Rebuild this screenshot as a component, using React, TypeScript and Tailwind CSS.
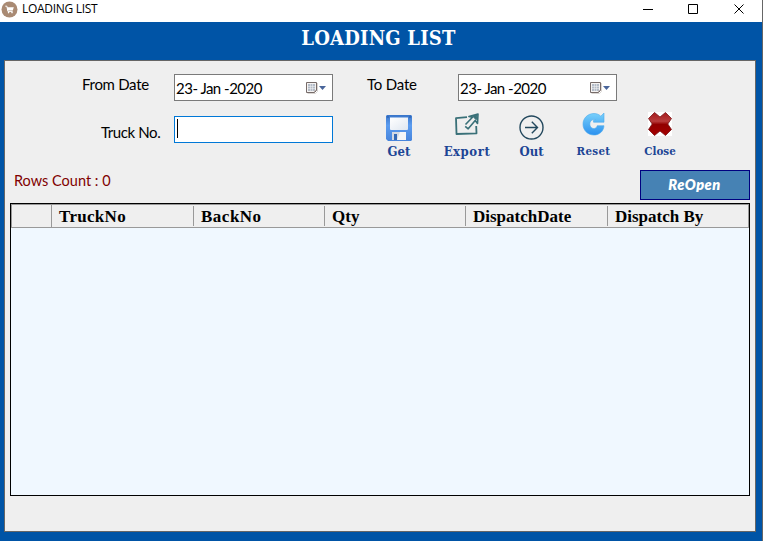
import React from 'react';

const sans = "font-['Lato','Liberation_Sans',sans-serif]";
const serif = "font-['DejaVu_Serif_Condensed','DejaVu_Serif',serif] font-bold";

function CartIcon() {
  return (
    <svg width="17" height="17" viewBox="0 0 17 17" className="shrink-0">
      <circle cx="8.5" cy="8.5" r="8" fill="#a98a73" />
      <path d="M4.3 5.2h1.6l1 5.2h4.7" fill="none" stroke="#fff" strokeWidth="1" />
      <path d="M6 6.2h6.8l-1 3.3H6.7z" fill="#fff" />
      <circle cx="7.6" cy="11.6" r=".8" fill="#fff" />
      <circle cx="11" cy="11.6" r=".8" fill="#fff" />
    </svg>
  );
}

function CalendarIcon() {
  return (
    <svg width="22" height="14" viewBox="0 0 22 14" className="shrink-0">
      <path d="M1.5 12.5h8l2-2V2" fill="none" stroke="#dad6d3" />
      <path d="M.5 1.5h10v8l-2 2h-8z" fill="#f5f3f2" stroke="#766b69" />
      <path d="M2 3h7v6l-1 1H2z" fill="#b4bcc8" />
      <path d="M2 5.5h7M2 7.5h7M4.5 3v7M6.5 3v7" stroke="#f5f5f5" strokeWidth=".5" />
      <path d="M10.5 9.5h-2v2z" fill="#766b69" />
      <path d="M13 5h7l-3.5 4z" fill="#49659a" />
    </svg>
  );
}

function DateField() {
  return (
    <div className="flex h-[27px] w-[159px] items-center justify-between border border-[#7a7a7a] bg-white pr-[4px] pl-[1px]">
      <span className="text-[15px] leading-[20px] tracking-[-0.5px] whitespace-pre text-black">23- Jan -2020</span>
      <CalendarIcon />
    </div>
  );
}

function SaveIcon() {
  return (
    <svg width="26" height="26" viewBox="0 0 26 26">
      <defs>
        <linearGradient id="disk" x2="0" y2="1"><stop stopColor="#3975c9" /><stop offset=".4" stopColor="#5b9cf0" /><stop offset="1" stopColor="#4785dc" /></linearGradient>
        <linearGradient id="paper" x2="1" y2="1"><stop stopColor="#fff" /><stop offset="1" stopColor="#dfe7f1" /></linearGradient>
      </defs>
      <path d="M1 0h24l1 1v24l-1 1H2l-2-2V1z" fill="url(#disk)" />
      <path d="M4 2.5h18V14q0 1-1 1H5q-1 0-1-1z" fill="url(#paper)" />
      <path d="M1.5 1.5h1v1h-1zm22 0h1v1h-1z" fill="#183e83" />
      <path d="M6 17h14v8H6z" fill="#d4dae3" />
      <path d="M14 17h6v8h-9z" fill="#f4f6f8" />
      <path d="M8 19h3v6H8z" fill="#3369b5" />
    </svg>
  );
}

function ExportIcon() {
  return (
    <svg width="24" height="22" viewBox="0 0 24 22" fill="none" stroke="#397078" strokeLinejoin="round">
      <path d="M12 4.2 1 5.1 1.5 21l20-.7-.3-7.3" strokeWidth="1.8" />
      <path d="m10.5 11.5 7-7.3-3.6-.7L23 1l-.5 9.5-2.3-3-7 8.3-3-2.5" strokeWidth="1.6" />
      <path d="M17.5 3 22 1.8l-.8 5z" fill="#397078" />
    </svg>
  );
}

function OutIcon() {
  return (
    <svg width="25" height="25" viewBox="0 0 25 25" fill="none" stroke="#23485d" strokeWidth="1.4">
      <circle cx="12.5" cy="12.5" r="11.5" />
      <path d="M6 12.5h12M12.8 6.8l5.7 5.7-5.7 5.7" />
    </svg>
  );
}

function ResetIcon() {
  return (
    <svg width="23" height="24" viewBox="0 0 23 24">
      <defs><linearGradient id="reset" x2="0" y2="1"><stop stopColor="#79d1fb" /><stop offset="1" stopColor="#2c91ef" /></linearGradient></defs>
      <path d="M22 1V10.2H11.5V8.4l2-.7C10.5 7 7.8 9 7.8 12s2.4 5 4.8 4.4c1.5-.4 2.2-1.2 2.6-2.7H22C21.6 19.3 17.3 23 12 23 5.8 23 1 18.3 1 12.2S5.8 1.5 12 1.5c2.8 0 5 1 6.8 2.7z" fill="url(#reset)" stroke="#49a9ed" strokeWidth=".6" />
    </svg>
  );
}

function CloseIcon() {
  return (
    <svg width="24" height="24" viewBox="0 0 24 24" className="bg-white">
      <defs><linearGradient id="close" x2="0" y2="1"><stop stopColor="#a51c1e" /><stop offset=".38" stopColor="#b83c3c" /><stop offset=".52" stopColor="#920000" /><stop offset="1" stopColor="#a40000" /></linearGradient></defs>
      <path d="M6.5.5 12 5l5.5-4.5 6 6L19.8 12l3.7 5.5-6 6L12 19l-5.5 4.5-6-6L4.2 12 .5 6.5z" fill="url(#close)" stroke="#791719" strokeWidth=".8" />
    </svg>
  );
}

function Tool({ icon, label, className }: { icon: React.ReactNode; label: string; className: string }) {
  return (
    <button className={`flex shrink-0 flex-col items-center text-[#1c4595] ${serif} ${className}`}>
      {icon}
      <span className="whitespace-nowrap">{label}</span>
    </button>
  );
}

function HeaderCell({ label, className }: { label: string; className: string }) {
  return (
    <div className={`flex h-[20px] shrink-0 items-center pl-[7px] ${className}`}>
      <span className="pt-[1px] whitespace-nowrap">{label}</span>
    </div>
  );
}

export default function App() {
  return (
    <div className={`flex h-[541px] w-[763px] flex-col overflow-hidden bg-[#0054a6] text-black ${sans}`}>
      <header className="flex h-[22px] shrink-0 items-center justify-between border-r border-[#666] bg-white">
        <div className="flex h-[18px] items-center gap-[4px] self-start pl-px">
          <CartIcon />
          <h2 className="font-['Open_Sans',sans-serif] text-[12px] leading-[18px] tracking-[-0.3px]">LOADING LIST</h2>
        </div>
        <svg width="119" height="18" viewBox="0 0 119 18" className="self-start" fill="none" stroke="#000">
          <path d="M0 9.5h10M45.5 4.5h9v9h-9zM91.5 4.5l9 9m0-9-9 9" />
        </svg>
      </header>
      <main className="flex min-h-0 flex-1 flex-col border-r border-[#666] pr-[6px] pl-[4px]">
        <h1 className={`h-[38px] shrink-0 pr-[3px] text-center text-[20px] leading-[32px] tracking-[0.2px] text-white ${serif}`}>LOADING LIST</h1>
        <section className="flex h-[472px] shrink-0 flex-col border border-[#666] bg-[#efefef] px-[5px]">
          <div className="flex h-[42px] shrink-0 items-start pt-[13px] pl-[72px] text-[15px]">
            <span className="w-[92px] leading-[20px] tracking-[-0.3px]">From Date</span>
            <DateField />
            <span className="w-[125px] pl-[34px] leading-[20px] tracking-[-0.2px]">To Date</span>
            <DateField />
          </div>
          <div className="flex h-[67px] shrink-0 items-start pl-[91px]">
            <label className="w-[73px] pt-[19px] text-[15px] leading-[20px] tracking-[-0.4px]">Truck No.</label>
            <div className="mt-[13px] flex h-[27px] w-[159px] items-start border border-[#0078d7] bg-white pt-[2px] pl-[2px]">
              <span className="h-[19px] w-px bg-black" />
            </div>
            <Tool icon={<SaveIcon />} label="Get" className="mt-[12px] ml-[47px] w-[38px] gap-[2px] text-[13px] leading-[18px]" />
            <Tool icon={<ExportIcon />} label="Export" className="mt-[10px] ml-[20px] w-[58px] gap-[8px] text-[13px] leading-[18px] tracking-[0.55px]" />
            <Tool icon={<OutIcon />} label="Out" className="mt-[12px] ml-[15px] w-[41px] gap-[3px] text-[13px] leading-[18px]" />
            <Tool icon={<ResetIcon />} label="Reset" className="mt-[9px] ml-[18px] w-[47px] gap-[6px] text-[11.5px] leading-[18px] tracking-[0.3px]" />
            <Tool icon={<CloseIcon />} label="Close" className="mt-[9px] ml-[20px] w-[46px] gap-[6px] text-[11.5px] leading-[18px]" />
          </div>
          <div className="flex h-[33px] shrink-0 items-start justify-between pl-[4px]">
            <span className="pt-px text-[14.5px] leading-[20px] text-[#800000]">Rows Count : 0</span>
            <button className="h-[30px] w-[110px] border border-[#000080] bg-[#4682b4] pr-px pb-px text-[14.5px] font-extrabold tracking-[0.5px] text-white italic">ReOpen</button>
          </div>
          <div className="h-[293px] w-[740px] shrink-0 border border-black bg-[#f0f8ff]">
            <div className="flex h-[24px] items-center border border-[#999] bg-[#efefef] font-['Liberation_Serif',serif] text-[17px] leading-[18px] font-bold">
              <div className="-my-px h-[22px] w-[40px] shrink-0 border-r border-[#999]" />
              <HeaderCell label="TruckNo" className="w-[142px] border-r border-[#999] tracking-[0.3px]" />
              <HeaderCell label="BackNo" className="w-[131px] border-r border-[#999] tracking-[0.5px]" />
              <HeaderCell label="Qty" className="w-[141px] border-r border-[#999]" />
              <HeaderCell label="DispatchDate" className="w-[142px] border-r border-[#999]" />
              <HeaderCell label="Dispatch By" className="w-[138px]" />
            </div>
          </div>
        </section>
      </main>
    </div>
  );
}
